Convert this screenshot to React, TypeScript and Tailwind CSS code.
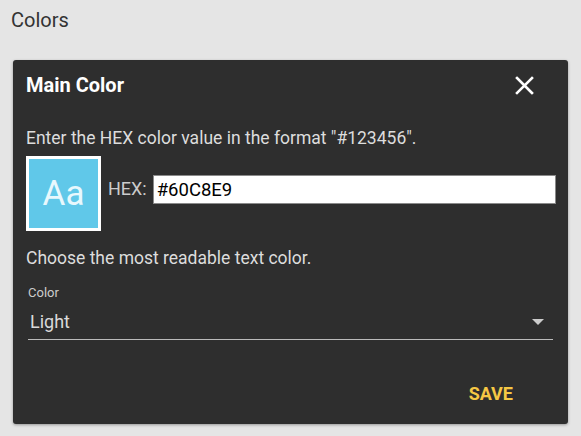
import React from 'react'

const font = { fontFamily: 'Roboto, "Noto Sans", sans-serif' }

function CloseIcon() {
  return (
    <svg width="19" height="19" viewBox="0 0 19 19" className="block">
      <path d="M2 2 L17 17 M17 2 L2 17" stroke="#ffffff" strokeWidth="2.6" strokeLinecap="square" />
    </svg>
  )
}

export default function App() {
  return (
    <div style={font} className="w-full h-[436px] bg-[#e5e5e5] pt-[8px] overflow-hidden">
      <div className="pl-[11px] text-[20px] leading-[24px] text-[#333333]">Colors</div>

      {/* Dialog card */}
      <div className="mt-[28px] ml-[13px] w-[555px] h-[364px] bg-[#2e2e2e] rounded-[3px] shadow-[0_1px_3px_rgba(0,0,0,0.35)] pl-[13px] pr-[12px] pt-[13px]">
        {/* Header */}
        <div className="flex items-center justify-between h-[24px]">
          <h2 className="text-[20px] leading-[24px] font-bold text-white">Main Color</h2>
          <button className="mr-[22px] mt-[1px]" aria-label="Close">
            <CloseIcon />
          </button>
        </div>

        <p className="mt-[31px] text-[17.5px] leading-[20px] text-[#dddddd]">
          Enter the HEX color value in the format "#123456".
        </p>

        {/* Swatch + input */}
        <div className="mt-[8px] flex items-start">
          <div className="w-[75px] h-[75px] border-[3px] border-white bg-[#60c8e9] flex items-center justify-center">
            <span className="text-[35px] leading-[35px] text-[#e8f8fd]">Aa</span>
          </div>
          <span className="ml-[7px] mt-[23px] text-[18px] leading-[20px] text-[#cccccc]">HEX:</span>
          <input
            defaultValue="#60C8E9"
            style={font}
            className="ml-[6px] mt-[19px] flex-1 h-[29px] bg-white border border-[#8a8a8a] px-[3px] text-[18.5px] text-black outline-none"
          />
        </div>

        <p className="mt-[17px] text-[17.5px] leading-[20px] text-[#dddddd]">
          Choose the most readable text color.
        </p>

        {/* Select */}
        <div className="mt-[17px] ml-[2px] mr-[3px]">
          <div className="text-[13px] leading-[16px] text-[#cccccc]">Color</div>
          <div className="mt-[10px] flex items-center justify-between border-b border-[#bbbbbb] pb-[6px] pl-[2px]">
            <span className="text-[18px] leading-[22px] text-[#dadada]">Light</span>
            <svg width="12" height="6" viewBox="0 0 12 6" className="mr-[9px]">
              <path d="M0 0 L12 0 L6 6 Z" fill="#cccccc" />
            </svg>
          </div>
        </div>

        {/* Actions */}
        <div className="mt-[43px] flex justify-end pr-[43px]">
          <button className="text-[18px] leading-[22px] font-bold text-[#f6c744]">SAVE</button>
        </div>
      </div>
    </div>
  )
}
